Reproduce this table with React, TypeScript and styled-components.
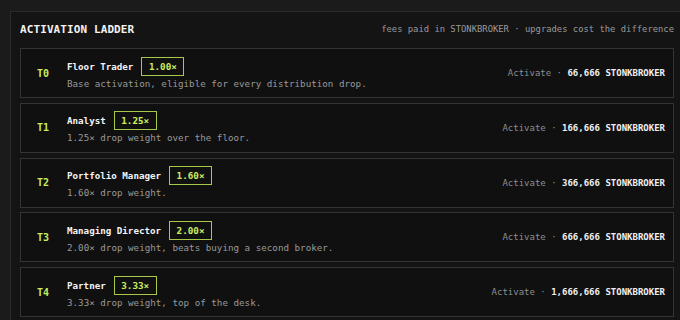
import React from 'react';
import styled, { createGlobalStyle } from 'styled-components';

const GlobalStyle = createGlobalStyle`
  html, body {
    margin: 0;
    padding: 0;
    background: #1b1b1b;
    overflow: hidden;
  }
  body {
    font-family: "DejaVu Sans Mono", "Liberation Mono", monospace;
  }
`;

const Page = styled.div`
  width: 680px;
  height: 320px;
  padding: 11px 0 0 10px;
  box-sizing: border-box;
  overflow: hidden;
`;

const Panel = styled.section`
  width: 674px;
  min-height: 330px;
  box-sizing: border-box;
  background: #141414;
  border: 1px solid #2c2c2c;
  padding: 10px 9px 0 9px;
`;

const Header = styled.header`
  display: flex;
  justify-content: space-between;
  align-items: center;
  height: 14px;
  margin-bottom: 12px;
`;

const Title = styled.h2`
  margin: 0;
  font-size: 11px;
  font-weight: bold;
  color: #f2f2f2;
  letter-spacing: 0.1px;
`;

const Note = styled.span`
  font-size: 8.85px;
  color: #9a9a9a;
`;

const List = styled.div`
  display: flex;
  flex-direction: column;
  gap: 4.8px;
`;

const Row = styled.div`
  height: 50px;
  box-sizing: border-box;
  display: flex;
  align-items: center;
  background: #101010;
  border: 1px solid #343434;
  padding: 0 8px 0 16px;
`;

const Tier = styled.div`
  width: 30px;
  flex: none;
  font-size: 10px;
  font-weight: bold;
  color: #c9ec5e;
`;

const Info = styled.div`
  flex: 1;
  display: flex;
  flex-direction: column;
  gap: 1px;
`;

const NameLine = styled.div`
  display: flex;
  align-items: center;
  gap: 8px;
  height: 19px;
`;

const Name = styled.span`
  font-size: 9.2px;
  font-weight: bold;
  color: #f4f4f4;
`;

const Badge = styled.span`
  height: 19px;
  box-sizing: border-box;
  display: inline-flex;
  align-items: center;
  padding: 0 6.5px;
  border: 1px solid #a9c84a;
  color: #cdee60;
  font-size: 9.3px;
  font-weight: bold;
`;

const Desc = styled.div`
  font-size: 9.22px;
  line-height: 13px;
  color: #999999;
`;

const Cost = styled.div`
  font-size: 9px;
  color: #8e8e8e;
  white-space: nowrap;
`;

const Amount = styled.b`
  color: #f0f0f0;
  font-weight: bold;
`;

const tiers = [
  { tier: 'T0', name: 'Floor Trader', mult: '1.00×', desc: 'Base activation, eligible for every distribution drop.', cost: '66,666' },
  { tier: 'T1', name: 'Analyst', mult: '1.25×', desc: '1.25× drop weight over the floor.', cost: '166,666' },
  { tier: 'T2', name: 'Portfolio Manager', mult: '1.60×', desc: '1.60× drop weight.', cost: '366,666' },
  { tier: 'T3', name: 'Managing Director', mult: '2.00×', desc: '2.00× drop weight, beats buying a second broker.', cost: '666,666' },
  { tier: 'T4', name: 'Partner', mult: '3.33×', desc: '3.33× drop weight, top of the desk.', cost: '1,666,666' },
];

const App: React.FC = () => {
  return (
    <Page>
      <GlobalStyle />
      <Panel>
        <Header>
          <Title>ACTIVATION LADDER</Title>
          <Note>fees paid in STONKBROKER · upgrades cost the difference</Note>
        </Header>
        <List>
          {tiers.map((t) => (
            <Row key={t.tier}>
              <Tier>{t.tier}</Tier>
              <Info>
                <NameLine>
                  <Name>{t.name}</Name>
                  <Badge>{t.mult}</Badge>
                </NameLine>
                <Desc>{t.desc}</Desc>
              </Info>
              <Cost>
                Activate · <Amount>{t.cost} STONKBROKER</Amount>
              </Cost>
            </Row>
          ))}
        </List>
      </Panel>
    </Page>
  );
};

export default App;
